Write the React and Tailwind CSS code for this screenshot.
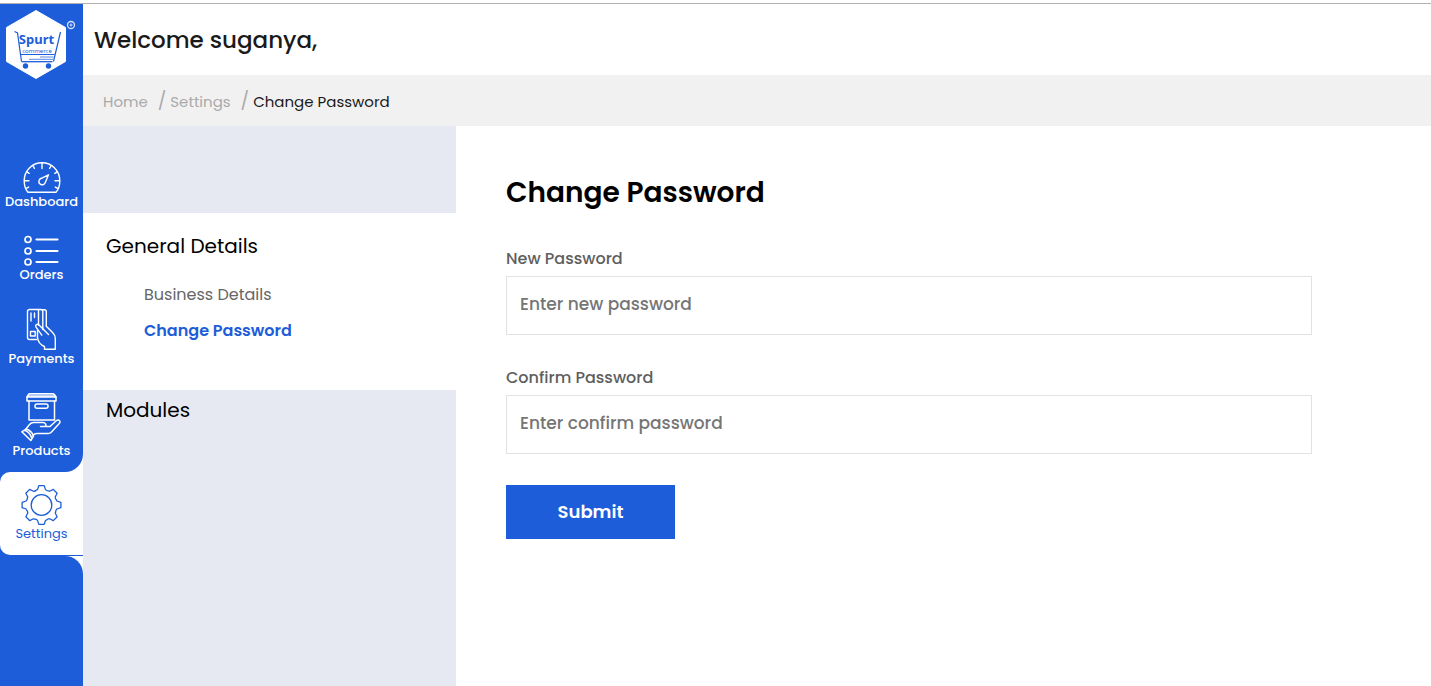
import React from 'react';

// One gear tooth outline, repeated every 45 degrees
const GEAR_PATH =
  Array.from({ length: 8 }, (_, i) => {
    const a = (i * Math.PI) / 4;
    const pt = (x, y) =>
      `${(x * Math.cos(a) - y * Math.sin(a)).toFixed(2)} ${(x * Math.sin(a) + y * Math.cos(a)).toFixed(2)}`;
    return `${i === 0 ? 'M' : 'L'}${pt(-4, -15.4)}L${pt(-2.7, -19.4)}L${pt(2.7, -19.4)}L${pt(4, -15.4)}Q${pt(5.4, -14)} ${pt(7, -14.2)}`;
  }).join('') + 'Z';

function Logo() {
  return (
    <svg viewBox="0 0 83 80" className="h-20 w-full" fontFamily="Noto Sans, Open Sans, sans-serif">
      <path d="M36 6.500 65.500 23.500v34L36 74.500 6.500 57.500v-34Z" fill="#fff" stroke="#fff" strokeLinejoin="round" />
      <g fill="none" stroke="#1d5dd9">
        <path d="M14.500 27.500 17.500 29 21.500 57.500M60.500 28 53.500 57.500" strokeWidth="1.200" />
        <path d="M21 50.500h33.500" strokeWidth="1" />
        <path d="M40 53h13.500M29 55.300h24" strokeWidth=".9" opacity=".8" />
        <path d="M21.500 57.700h31" strokeWidth="1.300" />
        <circle cx="71" cy="21" r="3.500" stroke="#d5e2fa" strokeWidth="1.300" />
        <circle cx="71" cy="21" r="1" stroke="#d5e2fa" />
      </g>
      <circle cx="25.500" cy="62" r="2.700" fill="#1d5dd9" />
      <circle cx="48.500" cy="62" r="2.700" fill="#1d5dd9" />
      <text x="36.500" y="39.500" textAnchor="middle" fontSize="13" fontWeight="700" fill="#1d5dd9">Spurt</text>
      <text x="37" y="48.500" textAnchor="middle" fontSize="6" fill="#1d5dd9">commerce</text>
    </svg>
  );
}

function DashboardIcon() {
  return (
    <svg viewBox="0 0 40 31" className="h-[31px] w-10 overflow-visible" fill="none" stroke="#fff" strokeWidth="1.400" strokeLinecap="round" strokeLinejoin="round">
      <path d="M6 30.300C3 27 2.200 23 2.200 18.800a17.800 18 0 0 1 35.600 0C37.800 23 37 27 34 30.300Z" />
      <path d="M20 1v5.500M2.500 18.800h4.500M33 18.800h4.500M10.800 3.500l1.600 2.800M29.200 3.500l-1.600 2.800M4.500 9.700l2.700 1.600M35.500 9.700l-2.700 1.600M4.200 26.300l2.500-1.200M35.800 26.300l-2.500-1.200" />
      <path d="M26.500 12.800 19.300 16.300a3.300 3.300 0 1 0 4 4.200Z" />
    </svg>
  );
}

function OrdersIcon() {
  return (
    <svg viewBox="1 0 40 30" className="h-[30px] w-10 overflow-visible" fill="none" stroke="#fff">
      {[3.5, 15, 26].map((y) => (
        <g key={y}>
          <circle cx="7" cy={y} r="3" strokeWidth="1.700" />
          <path d={`M15.500 ${y}h21`} strokeWidth="2.200" strokeLinecap="round" />
        </g>
      ))}
    </svg>
  );
}

function PaymentsIcon() {
  return (
    <svg viewBox="1 0 40 41" className="h-[41px] w-10 overflow-visible" fill="none" stroke="#fff" strokeWidth="1.400" strokeLinecap="round" strokeLinejoin="round">
      <path d="M15.500 30.500h-7a2 2 0 0 1-2-2V2.500a2 2 0 0 1 2-2h11.300a2 2 0 0 1 2 2v18M20 .7h3.300a2 2 0 0 1 2 2v14.500M17.500.7v15.500" />
      <path d="M10 4v8M13.500 4v4.500M9.500 22.500h4.700v4.500H9.500ZM16.500 21.500v7" />
      <path d="M27.500 25.500 17.800 15.800c-1.700-1.500-4 .3-2.800 2.400l5.800 8M25.300 17.200l6.500 6.500c1.700 1.700 2.500 3 2.500 5.500v11H23.500V37.500c-4-1.500-6.300-4-7-9" />
    </svg>
  );
}

function ProductsIcon() {
  return (
    <svg viewBox="1 0 40 49" className="h-[49px] w-10 overflow-visible" fill="none" stroke="#fff" strokeWidth="1.500" strokeLinecap="round" strokeLinejoin="round">
      <path d="M8 .8h24.500l2.500 3V8H6V3.800Z" />
      <path d="M6.500 1.500h28v2.500h-28Z" fill="#fff" fillOpacity=".7" stroke="none" />
      <path d="M6 4h29M8 8v19h25.500V8" />
      <rect x="14" y="11" width="13" height="4.200" rx="2" />
      <path d="M5 36 8.500 31.500c1.200-1.500 2.500-2 4-2h9.500c2.500 0 3.500 2.500 2.500 4H19.500M25 33.500h4L35.500 27.500c2.500-1.500 4.500.5 3 2.800L30 39.500c-.8.700-1.500.9-2.500.9H15.500c-1.500 0-2.500.8-3.500 2" />
      <path d="M5 36 .8 38.800l9 8.700 2.700-4.500c-1-3-4-6-7.500-7ZM3.500 37.200c3 1 6 4 7 7.300" />
    </svg>
  );
}

function SettingsIcon() {
  return (
    <svg viewBox="-19.500 -20 40 40" className="size-10 overflow-visible" fill="none" stroke="#1d5dd9" strokeWidth="1.300" strokeLinejoin="round">
      <path d={GEAR_PATH} />
      <circle r="10.300" />
    </svg>
  );
}

const NAV_ITEMS = [
  { label: 'Dashboard', icon: DashboardIcon },
  { label: 'Orders', icon: OrdersIcon },
  { label: 'Payments', icon: PaymentsIcon },
  { label: 'Products', icon: ProductsIcon },
];

function Sidebar() {
  return (
    <aside className="flex w-[83px] shrink-0 flex-col bg-white">
      <div className="rounded-br-[18px] bg-[#1d5dd9] pb-[13px]">
        <Logo />
        <nav className="flex flex-col gap-[26px] pt-[78px]">
          {NAV_ITEMS.map(({ label, icon: Icon }) => (
            <a key={label} href="#" className="flex flex-col items-center gap-px text-[13px] leading-4 font-medium text-white">
              <Icon />
              {label}
            </a>
          ))}
        </nav>
      </div>
      {/* Active item */}
      <div className="bg-[#1d5dd9] pb-px">
        <a href="#" aria-current="page" className="flex flex-col items-center gap-px rounded-l-[10px] bg-white py-[13px] text-[13px] leading-4 text-[#1d5dd9]">
          <SettingsIcon />
          Settings
        </a>
      </div>
      <div className="grow rounded-tr-[18px] bg-[#1d5dd9]" />
    </aside>
  );
}

function PasswordField({ id, label, placeholder }) {
  return (
    <div className="mb-[31px]">
      <label htmlFor={id} className="mb-[5px] block text-base leading-6 font-medium text-[#5e5e5e]">
        {label}
      </label>
      <input
        id={id}
        type="password"
        placeholder={placeholder}
        className="block h-[59px] w-full border border-[#e2e2e2] px-[13px] pb-[3px] text-[17px] font-medium placeholder:text-[#757575]"
      />
    </div>
  );
}

export default function App() {
  return (
    <div className="flex min-h-screen flex-col bg-white pt-[3px] font-[Poppins,Inter,sans-serif]">
      <div className="flex grow border-t border-[#b0b0b0]">
        <Sidebar />
        <div className="flex grow flex-col">
          <header className="flex h-[71px] items-center px-[11px] pt-0.5">
            <h1 className="text-[23px] font-medium text-[#1a1a1a]">Welcome suganya,</h1>
          </header>

          <nav aria-label="Breadcrumb" className="flex h-[51px] items-center bg-[#f1f1f1] pt-[3px] pl-5 text-[15px] text-[#aaaaaa]">
            <a href="#" className="pr-2.5">Home</a>
            <span className="pr-1 pb-0.5 text-lg">/</span>
            <a href="#" className="pr-2.5">Settings</a>
            <span className="pr-1 pb-0.5 text-lg">/</span>
            <span className="text-[#1a1a1a]">Change Password</span>
          </nav>

          <div className="flex grow">
            <section className="w-[373px] shrink-0 bg-[#e6e9f2] pt-[87px]">
              <div className="bg-white px-[23px] pt-[18px] pb-[41px]">
                <h2 className="text-xl leading-[30px]">General Details</h2>
                <ul className="pt-4 pl-[38px] text-base leading-9">
                  <li><a href="#" className="text-[#666666]">Business Details</a></li>
                  <li><a href="#" className="font-semibold text-[#1d5dd9]">Change Password</a></li>
                </ul>
              </div>
              <h2 className="px-[23px] pt-[5px] text-xl leading-[30px]">Modules</h2>
            </section>

            <main className="grow pt-[47px] pr-[119px] pl-[50px]">
              <h2 className="mb-[34px] text-[28px] leading-10 font-semibold">Change Password</h2>
              <form>
                <PasswordField id="new-password" label="New Password" placeholder="Enter new password" />
                <PasswordField id="confirm-password" label="Confirm Password" placeholder="Enter confirm password" />
                <button type="button" className="h-[54px] w-[169px] bg-[#1d5dd9] text-lg font-semibold text-white">
                  Submit
                </button>
              </form>
            </main>
          </div>
        </div>
      </div>
    </div>
  );
}
